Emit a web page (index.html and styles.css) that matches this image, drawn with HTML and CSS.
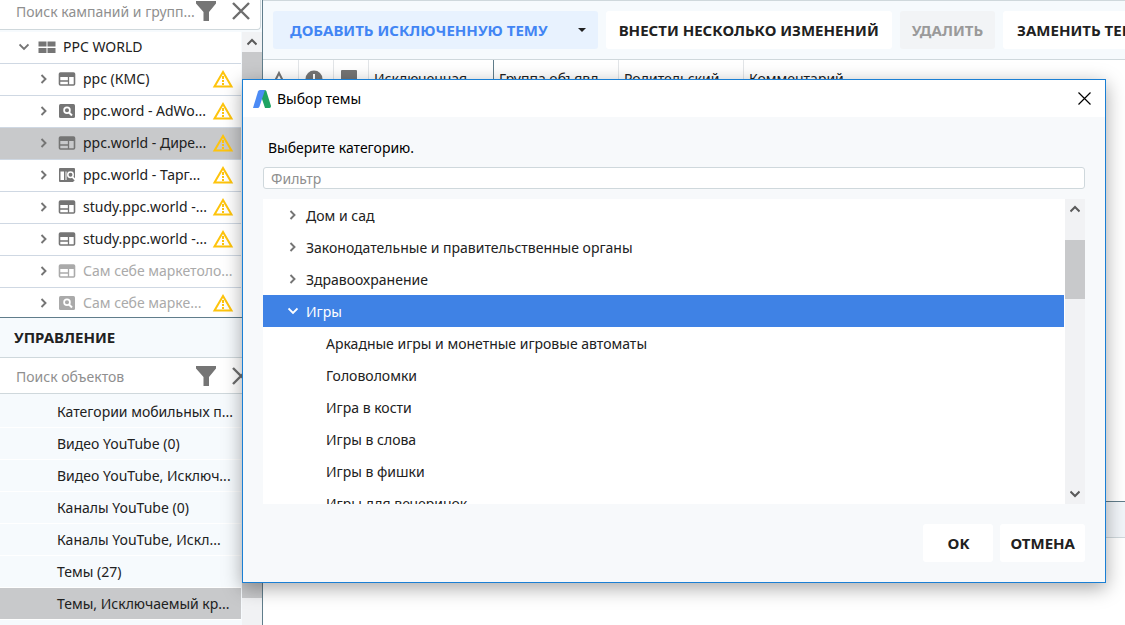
FILE: index.html
```html
<!DOCTYPE html>
<html lang="ru">
<head>
<meta charset="utf-8">
<title>Выбор темы</title>
<link rel="stylesheet" href="styles.css">
</head>
<body>
<svg class="defs" aria-hidden="true">
  <symbol id="right" viewBox="0 0 10 10"><path d="M2.500 1l4 4-4 4" fill="none" stroke="currentColor" stroke-width="1.900"/></symbol>
  <symbol id="down" viewBox="0 0 10 10"><path d="M0.500 2.500L5 7l4.500-4.500" fill="none" stroke="currentColor" stroke-width="1.900"/></symbol>
  <symbol id="sup" viewBox="0 0 10 10"><path d="M.500 7.500L5 3l4.500 4.500" fill="none" stroke="#5a5a5a" stroke-width="2"/></symbol>
  <symbol id="sdown" viewBox="0 0 10 10"><path d="M.500 2.500L5 7l4.500-4.500" fill="none" stroke="#5a5a5a" stroke-width="2"/></symbol>
  <symbol id="account" viewBox="0 0 18 14"><path fill="currentColor" d="M.500 1.500h8v5h-8zM9.500 1.500h8v5h-8zM.500 8h8v5h-8zM9.500 8h8v5h-8z"/></symbol>
  <symbol id="display" viewBox="0 0 18 14"><rect x="1.500" y="1" width="15" height="12" rx="1" fill="none" stroke="currentColor" stroke-width="1.600"/><path d="M1 1h16v4H1z" fill="currentColor"/><path d="M2 9h8M10.500 5v8" stroke="currentColor" stroke-width="1.300"/></symbol>
  <symbol id="search" viewBox="0 0 18 14"><rect x="1" width="16" height="14" rx="1.500" fill="currentColor"/><circle cx="9" cy="6.300" r="2.900" fill="none" stroke="#fff" stroke-width="1.700"/><path d="M11 8.500l3 3" stroke="#fff" stroke-width="2"/></symbol>
  <symbol id="mixed" viewBox="0 0 18 14"><path fill="currentColor" d="M1 1q0-1 1-1h14q1 0 1 1v11l-2 2H2q-1 0-1-1z"/><path fill="#fff" d="M2.500 3.500H6V12H2.500zM7.500 3.500h1V12h-1z"/><circle cx="12.500" cy="6.800" r="2.700" fill="none" stroke="#fff" stroke-width="1.500"/><path d="M14.300 8.800l3 3" stroke="#fff" stroke-width="1.800"/></symbol>
  <symbol id="warn" viewBox="0 0 22 20"><path d="M11 3L2.500 17.500h17z" fill="none" stroke="#fec40c" stroke-width="2"/><path d="M11 7v3m0 1v2m0 1v2" stroke="#fec40c" stroke-width="2"/></symbol>
  <symbol id="funnel" viewBox="0 0 20 20"><path d="M0 0h20v2.500L13 11v9H7.500v-9L0 2.500z" fill="#757575"/></symbol>
  <symbol id="clear" viewBox="0 0 18 18"><path d="M1 1l16 16m0-16l-16 16" stroke="#6d6d6d" stroke-width="2.400" fill="none"/></symbol>
</svg>
<div class="app">
  <aside class="sidebar">
    <section class="pane campaigns">
      <div class="searchbar">
        <input type="text" aria-label="Поиск кампаний и групп" placeholder="Поиск кампаний и групп...">
        <button aria-label="Фильтр кампаний"><svg class="i20"><use href="#funnel"/></svg></button>
        <button aria-label="Очистить поиск кампаний"><svg class="i18"><use href="#clear"/></svg></button>
      </div>
      <div class="scroller">
        <ul class="tree">
          <li class="root"><svg class="arrow"><use href="#down"/></svg><svg class="kind"><use href="#account"/></svg><span>PPC WORLD</span></li>
          <li><svg class="arrow"><use href="#right"/></svg><svg class="kind"><use href="#display"/></svg><span>ppc (КМС)</span><svg class="warn"><use href="#warn"/></svg></li>
          <li><svg class="arrow"><use href="#right"/></svg><svg class="kind"><use href="#search"/></svg><span>ppc.word - AdWo...</span><svg class="warn"><use href="#warn"/></svg></li>
          <li class="selected"><svg class="arrow"><use href="#right"/></svg><svg class="kind"><use href="#display"/></svg><span>ppc.world - Дире...</span><svg class="warn"><use href="#warn"/></svg></li>
          <li><svg class="arrow"><use href="#right"/></svg><svg class="kind"><use href="#mixed"/></svg><span>ppc.world - Тарг...</span><svg class="warn"><use href="#warn"/></svg></li>
          <li><svg class="arrow"><use href="#right"/></svg><svg class="kind"><use href="#display"/></svg><span>study.ppc.world -...</span><svg class="warn"><use href="#warn"/></svg></li>
          <li><svg class="arrow"><use href="#right"/></svg><svg class="kind"><use href="#display"/></svg><span>study.ppc.world -...</span><svg class="warn"><use href="#warn"/></svg></li>
          <li class="paused"><svg class="arrow"><use href="#right"/></svg><svg class="kind"><use href="#display"/></svg><span>Сам себе маркетоло...</span></li>
          <li class="paused"><svg class="arrow"><use href="#right"/></svg><svg class="kind"><use href="#search"/></svg><span>Сам себе марке...</span><svg class="warn"><use href="#warn"/></svg></li>
        </ul>
        <div class="scrollbar"><svg class="cap"><use href="#sup"/></svg><div class="thumb long"></div></div>
      </div>
    </section>
    <section class="pane manage">
      <h2>УПРАВЛЕНИЕ</h2>
      <div class="searchbar">
        <input type="text" aria-label="Поиск объектов" placeholder="Поиск объектов">
        <button aria-label="Фильтр объектов"><svg class="i20"><use href="#funnel"/></svg></button>
        <button aria-label="Очистить поиск объектов"><svg class="i18"><use href="#clear"/></svg></button>
      </div>
      <div class="scroller">
        <ul class="types">
          <li>Категории мобильных п...</li>
          <li>Видео YouTube (0)</li>
          <li>Видео YouTube, Исключ...</li>
          <li>Каналы YouTube (0)</li>
          <li>Каналы YouTube, Искл...</li>
          <li>Темы (27)</li>
          <li class="selected">Темы, Исключаемый кр...</li>
        </ul>
        <div class="scrollbar"><div class="thumb tall"></div></div>
      </div>
    </section>
  </aside>
  <main class="main">
    <div class="toolbar">
      <button class="btn primary">ДОБАВИТЬ ИСКЛЮЧЕННУЮ ТЕМУ<span class="caret"></span></button>
      <button class="btn mid">ВНЕСТИ НЕСКОЛЬКО ИЗМЕНЕНИЙ</button>
      <button class="btn" disabled>УДАЛИТЬ</button>
      <button class="btn wide">ЗАМЕНИТЬ ТЕКСТ</button>
    </div>
    <table class="grid">
      <thead><tr>
        <th class="flag first"><svg class="flagicon" viewBox="0 0 18 18" aria-label="Изменения"><path d="M9 3L3 15h12z" fill="none" stroke="#757575" stroke-width="2"/></svg></th>
        <th class="flag"><svg class="flagicon" viewBox="0 0 18 18" aria-label="Ошибки"><circle cx="9" cy="9" r="8.500" fill="#757575"/><path d="M9 4v6m0 2v2" stroke="#fff" stroke-width="2"/></svg></th>
        <th class="flag"><svg class="flagicon" viewBox="0 0 18 18" aria-label="Комментарии"><path d="M2 0h14q1 0 1 1v16l-4-3H2q-1 0-1-1V1q0-1 1-1z" fill="#757575"/></svg></th>
        <th class="col sorted">Исключенная</th>
        <th class="col">Группа объявл...</th>
        <th class="col">Родительский</th>
        <th class="last">Комментарий</th>
      </tr></thead>
    </table>
    <div class="editor"></div>
  </main>
</div>

<section class="dialog" role="dialog" aria-labelledby="dialog-title">
  <header class="titlebar">
    <svg class="logo" viewBox="0 0 18 18"><path d="M9 0h3q1 0 1.500 1.500L18 16q0 2-1.500 2H12L8 6z" fill="#1ea362"/><path d="M7 0h5L6.500 16.500Q6 18 4.500 18H0L5 1.500Q5.500 0 7 0z" fill="#4c8bf5"/></svg>
    <h1 id="dialog-title">Выбор темы</h1>
    <button aria-label="Закрыть"><svg class="close" viewBox="0 0 13 13"><path d="M.5.5l12 12m0-12l-12 12" stroke="#000" stroke-width="1.200"/></svg></button>
  </header>
  <div class="content">
    <label for="filter">Выберите категорию.</label>
    <input id="filter" class="filter" type="text" placeholder="Фильтр">
    <div class="picker">
      <ul class="topics">
        <li><svg class="arrow"><use href="#right"/></svg><span>Дом и сад</span></li>
        <li><svg class="arrow"><use href="#right"/></svg><span>Законодательные и правительственные органы</span></li>
        <li><svg class="arrow"><use href="#right"/></svg><span>Здравоохранение</span></li>
        <li class="active"><svg class="arrow"><use href="#down"/></svg><span>Игры</span></li>
        <li class="child"><span>Аркадные игры и монетные игровые автоматы</span></li>
        <li class="child"><span>Головоломки</span></li>
        <li class="child"><span>Игра в кости</span></li>
        <li class="child"><span>Игры в слова</span></li>
        <li class="child"><span>Игры в фишки</span></li>
        <li class="child"><span>Игры для вечеринок</span></li>
      </ul>
      <div class="scrollbar"><svg class="cap"><use href="#sup"/></svg><div class="thumb short"></div><svg class="cap"><use href="#sdown"/></svg></div>
    </div>
    <footer class="actions">
      <button class="btn ok">OK</button>
      <button class="btn">ОТМЕНА</button>
    </footer>
  </div>
</section>
</body>
</html>
```
FILE: styles.css
```css
* { box-sizing: border-box; }
body {
  margin: 0;
  height: 100vh;
  overflow: hidden;
  font: 14px/20px "Noto Sans", "Open Sans", sans-serif;
  color: #212121;
  background: #fff;
}
button, input { font: inherit; color: inherit; }
button { border: 0; padding: 0; background: none; }
ul { list-style: none; margin: 0; padding: 0; }
svg { display: block; flex: none; }
h1, h2 { margin: 0; font-size: inherit; }
.defs { position: absolute; width: 0; height: 0; }
input::placeholder { color: #8f8f8f; opacity: 1; }

.app { display: grid; grid-template-columns: 263px 1fr; height: 100%; }

/* sidebar */
.sidebar {
  display: grid;
  grid-template-rows: 318px 1fr;
  min-height: 0;
  border-right: 1px solid #607d8b;
  background: #f6fafd;
}
.pane { display: flex; flex-direction: column; min-height: 0; overflow: hidden; }
.campaigns { border-bottom: 1px solid #607d8b; }
.searchbar {
  display: flex;
  align-items: center;
  flex: none;
  gap: 16px;
  height: 36px;
  padding: 0 12px 0 16px;
  background: #fff;
  border-bottom: 1px solid #cfd8dc;
}
.campaigns .searchbar {
  height: 30px;
  margin: 0 1px 2px 0;
  padding: 0 10px 7px 16px;
  border-right: 1px solid #cfd8dc;
  border-radius: 0 0 4px 0;
}
.searchbar input { flex: 1; min-width: 0; border: 0; padding: 2px 0 0; margin-right: -16px; background: none; outline: 0; }
.i20 { width: 20px; height: 20px; }
.i18 { width: 18px; height: 18px; }
.scroller { display: flex; flex: 1; min-height: 0; }
.tree, .types { flex: 1; min-width: 0; overflow: hidden; margin-right: 1px; }
.tree li {
  display: flex;
  align-items: center;
  height: 32px;
  padding: 0 7px 2px 39px;
  background: #fff;
  border-bottom: 1px solid #cfd8e3;
  white-space: nowrap;
}
.tree .root { padding-left: 19px; }
.tree .selected, .types .selected { background: #c8c9cb; }
.tree span { flex: 1; min-width: 0; padding-top: 1px; }
.paused span { color: #aaa; }
.paused .kind { color: #aaa; }
.arrow { width: 10px; height: 10px; color: #757575; }
.kind { width: 18px; height: 14px; margin: 0 7px 0 9px; color: #757575; }
.warn { width: 22px; height: 20px; }

.manage h2 { height: 40px; flex: none; padding-left: 14px; font-size: 15px; line-height: 39px; border-bottom: 1px solid #cfd8dc; }
.manage .searchbar { margin-bottom: 2px; }
.types li { height: 32px; padding-left: 57px; line-height: 32px; border-bottom: 1px solid #fff; white-space: nowrap; }

.scrollbar { display: flex; flex-direction: column; align-items: center; flex: none; width: 20px; background: #f1f2f4; }
.cap { width: 10px; height: 10px; margin: 5px 0; }
.thumb { width: 20px; background: #c8c9cb; }
.long { flex: 1; }
.tall { height: 202px; }
.short { height: 59px; margin: 21px 0 auto; }

/* work area */
.main { display: flex; flex-direction: column; min-width: 0; overflow: hidden; }
.toolbar {
  display: flex;
  gap: 8px;
  flex: none;
  padding: 10px 0 10px 10px;
  background: #f6fafd;
  border-top: 1px solid #cfd8dc;
  border-bottom: 1px solid #cfd8dc;
}
.btn { height: 38px; flex: none; padding: 0 10px; background: #fff; border-radius: 3px; font-size: 15px; font-weight: bold; white-space: nowrap; }
.btn:disabled { padding: 0 12px; background: #f2f4f6; color: #9a9a9a; }
.mid { padding: 0 13px; }
.wide { padding: 0 14px; }
.primary { display: flex; align-items: center; gap: 30px; padding: 0 12px 0 17px; background: #e8f2fe; color: #4285f4; }
.caret { border: 4px solid transparent; border-top-color: #212121; border-bottom: 0; }
.grid { flex: none; width: 100%; table-layout: fixed; border-spacing: 0; }
.grid th { height: 37px; padding: 0 0 0 5px; border-right: 1px solid #e2e5e8; font-weight: normal; text-align: left; white-space: nowrap; overflow: hidden; }
.grid .flag { width: 35px; padding: 0 0 0 6px; }
.grid .first { width: 36px; padding-left: 7px; }
.grid .col { width: 125px; }
.grid .sorted { border-right-color: #607d8b; }
.grid .last { border: 0; }
.flagicon { width: 18px; height: 18px; }
.editor { height: 37px; margin: auto 0 87px; background: #f1f5f9; border-top: 1px solid #607d8b; border-bottom: 1px solid #cfd8dc; }

/* topic dialog window */
.dialog {
  position: absolute;
  top: 79px;
  left: 242px;
  right: 19px;
  background: #f7f9fb;
  border: 1px solid #1a7fd4;
  box-shadow: 0 5px 18px rgba(0, 0, 0, .35);
  color: #212121;
}
.titlebar { display: flex; align-items: center; gap: 6px; height: 37px; padding: 0 14px 0 10px; background: #fff; color: #000; }
.titlebar h1 { flex: 1; font-weight: normal; }
.logo { width: 18px; height: 18px; }
.close { width: 13px; height: 13px; }
.content { display: flex; flex-direction: column; padding: 21px 20px 20px; }
.content label { padding-left: 5px; color: #000; }
.filter { height: 22px; margin: 9px 0 10px; padding: 0 7px; border: 1px solid #cfd8dc; border-radius: 3px; background: #fff; }
.picker { display: flex; height: 305px; background: #fff; }
.topics { flex: 1; overflow: hidden; margin-right: 1px; }
.topics li { display: flex; align-items: center; gap: 8px; height: 32px; padding: 0 25px; }
.topics span { padding-top: 2px; }
.topics .child { padding-left: 63px; }
.topics .active { background: #3f82e5; color: #fff; }
.active .arrow { color: #fff; }
.actions { display: flex; justify-content: flex-end; gap: 7px; padding-top: 20px; }
.ok { width: 70px; }
```
